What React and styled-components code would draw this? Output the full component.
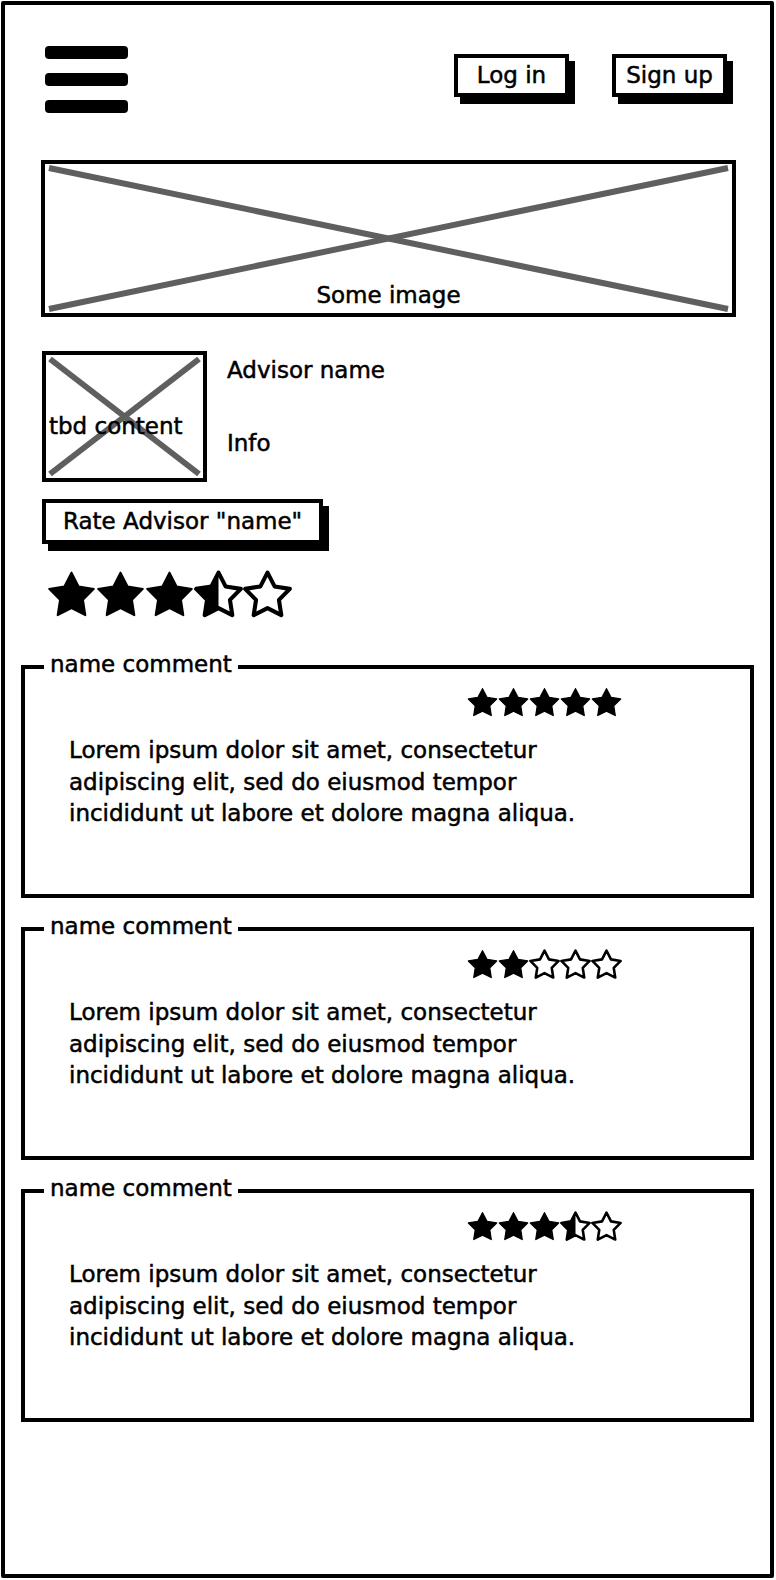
import React, { useId } from "react";
import styled, { createGlobalStyle } from "styled-components";

const GlobalStyle = createGlobalStyle`
  html, body { margin: 0; padding: 0; background: #fff; }
  body {
    font-family: "DejaVu Sans", "Liberation Sans", sans-serif;
    font-size: 23px;
    color: #000;
    -webkit-text-stroke: 0.5px #000;
  }
  *, *::before, *::after { box-sizing: border-box; }
`;

const Frame = styled.div`
  width: 773px;
  height: 1577px;
  margin: 1px 0 0 1px;
  border: 4px solid #000;
  border-radius: 2px;
  background: #fff;
  display: flex;
  flex-direction: column;
  overflow: hidden;
`;

const Header = styled.header`
  display: flex;
  justify-content: space-between;
  align-items: flex-start;
  padding: 41px 43px 0 40px;
`;

const Hamburger = styled.div`
  display: flex;
  flex-direction: column;
  gap: 14px;
`;

const Bar = styled.span`
  display: block;
  width: 83px;
  height: 13px;
  border-radius: 4px;
  background: #000;
`;

const AuthGroup = styled.div`
  display: flex;
  gap: 43px;
  margin-top: 8px;
`;

const SketchButton = styled.button`
  display: flex;
  align-items: center;
  justify-content: ${(p) => (p.$left ? "flex-start" : "center")};
  width: ${(p) => p.$w}px;
  height: ${(p) => p.$h || 43}px;
  padding: 0 0 0 ${(p) => (p.$left ? 17 : 0)}px;
  border: 4px solid #000;
  background: #fff;
  box-shadow: 6px 7px 0 #000;
  font-family: "DejaVu Sans", sans-serif;
  font-size: 23px;
  line-height: 27px;
  color: #000;
  -webkit-text-stroke: 0.5px #000;
  cursor: pointer;
`;

const ImageBox = styled.div`
  position: relative;
  display: flex;
  align-items: flex-end;
  justify-content: center;
  width: 695px;
  height: 157px;
  margin: 47px 0 0 36px;
  padding-bottom: 4px;
  border: 4px solid #000;
`;

const CrossSvg = styled.svg`
  position: absolute;
  inset: 0;
  width: 100%;
  height: 100%;
`;

const OverLabel = styled.span`
  position: relative;
  z-index: 1;
  line-height: 27px;
`;

const AdvisorRow = styled.section`
  display: flex;
  gap: 20px;
  margin: 34px 0 0 37px;
`;

const Thumb = styled.div`
  position: relative;
  display: flex;
  align-items: flex-start;
  width: 165px;
  height: 131px;
  padding: 58px 0 0 3px;
  border: 4px solid #000;
`;

const InfoColumn = styled.div`
  display: flex;
  flex-direction: column;
  gap: 46px;
  padding-top: 6px;
`;

const InfoLine = styled.span`
  line-height: 27px;
`;

const RateWrap = styled.div`
  margin: 17px 0 0 37px;
`;

const StarRow = styled.div`
  display: flex;
  padding-left: ${(p) => p.$indent || 0}px;
`;

const BigStars = styled(StarRow)`
  margin: 26px 0 0 42px;
`;

const StarSvg = styled.svg`
  display: block;
  flex: none;
`;

const Comments = styled.section`
  display: flex;
  flex-direction: column;
  gap: 14.5px;
  margin: 31px 16px 0 16px;
`;

const CommentBox = styled.fieldset`
  margin: 0;
  padding: 0;
  min-width: 0;
  border: 4px solid #000;
`;

const CommentLegend = styled.legend`
  margin-left: 19px;
  padding: 0 6px 5px;
  font-size: 23px;
  line-height: 28px;
`;

const CommentBody = styled.div`
  padding: 4px 20px 64px 44px;
`;

const CommentText = styled.p`
  margin: 17px 0 0;
  max-width: 520px;
  font-size: 23px;
  line-height: 31.5px;
`;

const STAR_POINTS = (() => {
  const pts = [];
  for (let i = 0; i < 10; i++) {
    const a = ((-90 + i * 36) * Math.PI) / 180;
    const r = i % 2 === 0 ? 11.5 : 5.9;
    pts.push(`${(12 + r * Math.cos(a)).toFixed(2)},${(12.8 + r * Math.sin(a)).toFixed(2)}`);
  }
  return pts.join(" ");
})();

function Star({ size, kind }) {
  const raw = useId();
  const id = "c" + raw.replace(/[^a-zA-Z0-9_-]/g, "");
  return (
    <StarSvg width={size} height={size} viewBox="0 0 24 24">
      {kind === "half" && (
        <defs>
          <clipPath id={id}>
            <rect x="0" y="0" width="12" height="24" />
          </clipPath>
        </defs>
      )}
      <polygon
        points={STAR_POINTS}
        fill={kind === "full" ? "#000" : "#fff"}
        stroke="#000"
        strokeWidth={kind === "full" ? 1 : 2}
        strokeLinejoin="round"
      />
      {kind === "half" && (
        <polygon points={STAR_POINTS} fill="#000" clipPath={`url(#${id})`} />
      )}
    </StarSvg>
  );
}

function Rating({ value, size }) {
  const kinds = [0, 1, 2, 3, 4].map((i) =>
    value >= i + 1 ? "full" : value >= i + 0.5 ? "half" : "empty"
  );
  return kinds.map((k, i) => <Star key={i} size={size} kind={k} />);
}

function Cross({ w, h, inset }) {
  return (
    <CrossSvg viewBox={`0 0 ${w} ${h}`} preserveAspectRatio="none" aria-hidden="true">
      <g stroke="#5f5f5f" strokeWidth="6" strokeLinecap="butt">
        <line x1={inset} y1={inset} x2={w - inset} y2={h - inset} />
        <line x1={inset} y1={h - inset} x2={w - inset} y2={inset} />
      </g>
    </CrossSvg>
  );
}

const LOREM =
  "Lorem ipsum dolor sit amet, consectetur adipiscing elit, sed do eiusmod tempor incididunt ut labore et dolore magna aliqua.";

const comments = [
  { name: "name comment", rating: 5 },
  { name: "name comment", rating: 2 },
  { name: "name comment", rating: 3.5 },
];

export default function App() {
  return (
    <>
      <GlobalStyle />
      <Frame>
        <Header>
          <Hamburger aria-label="Menu">
            <Bar />
            <Bar />
            <Bar />
          </Hamburger>
          <AuthGroup>
            <SketchButton $w={115}>Log in</SketchButton>
            <SketchButton $w={115}>Sign up</SketchButton>
          </AuthGroup>
        </Header>

        <ImageBox>
          <Cross w={687} h={149} inset={4} />
          <OverLabel>Some image</OverLabel>
        </ImageBox>

        <AdvisorRow>
          <Thumb>
            <Cross w={157} h={123} inset={4} />
            <OverLabel>tbd content</OverLabel>
          </Thumb>
          <InfoColumn>
            <InfoLine>Advisor name</InfoLine>
            <InfoLine>Info</InfoLine>
          </InfoColumn>
        </AdvisorRow>

        <RateWrap>
          <SketchButton $w={281} $h={45} $left>
            Rate Advisor "name"
          </SketchButton>
        </RateWrap>

        <BigStars>
          <Rating value={3.5} size={49} />
        </BigStars>

        <Comments>
          {comments.map((c, i) => (
            <CommentBox key={i}>
              <CommentLegend>{c.name}</CommentLegend>
              <CommentBody>
                <StarRow $indent={398}>
                  <Rating value={c.rating} size={31} />
                </StarRow>
                <CommentText>{LOREM}</CommentText>
              </CommentBody>
            </CommentBox>
          ))}
        </Comments>
      </Frame>
    </>
  );
}
